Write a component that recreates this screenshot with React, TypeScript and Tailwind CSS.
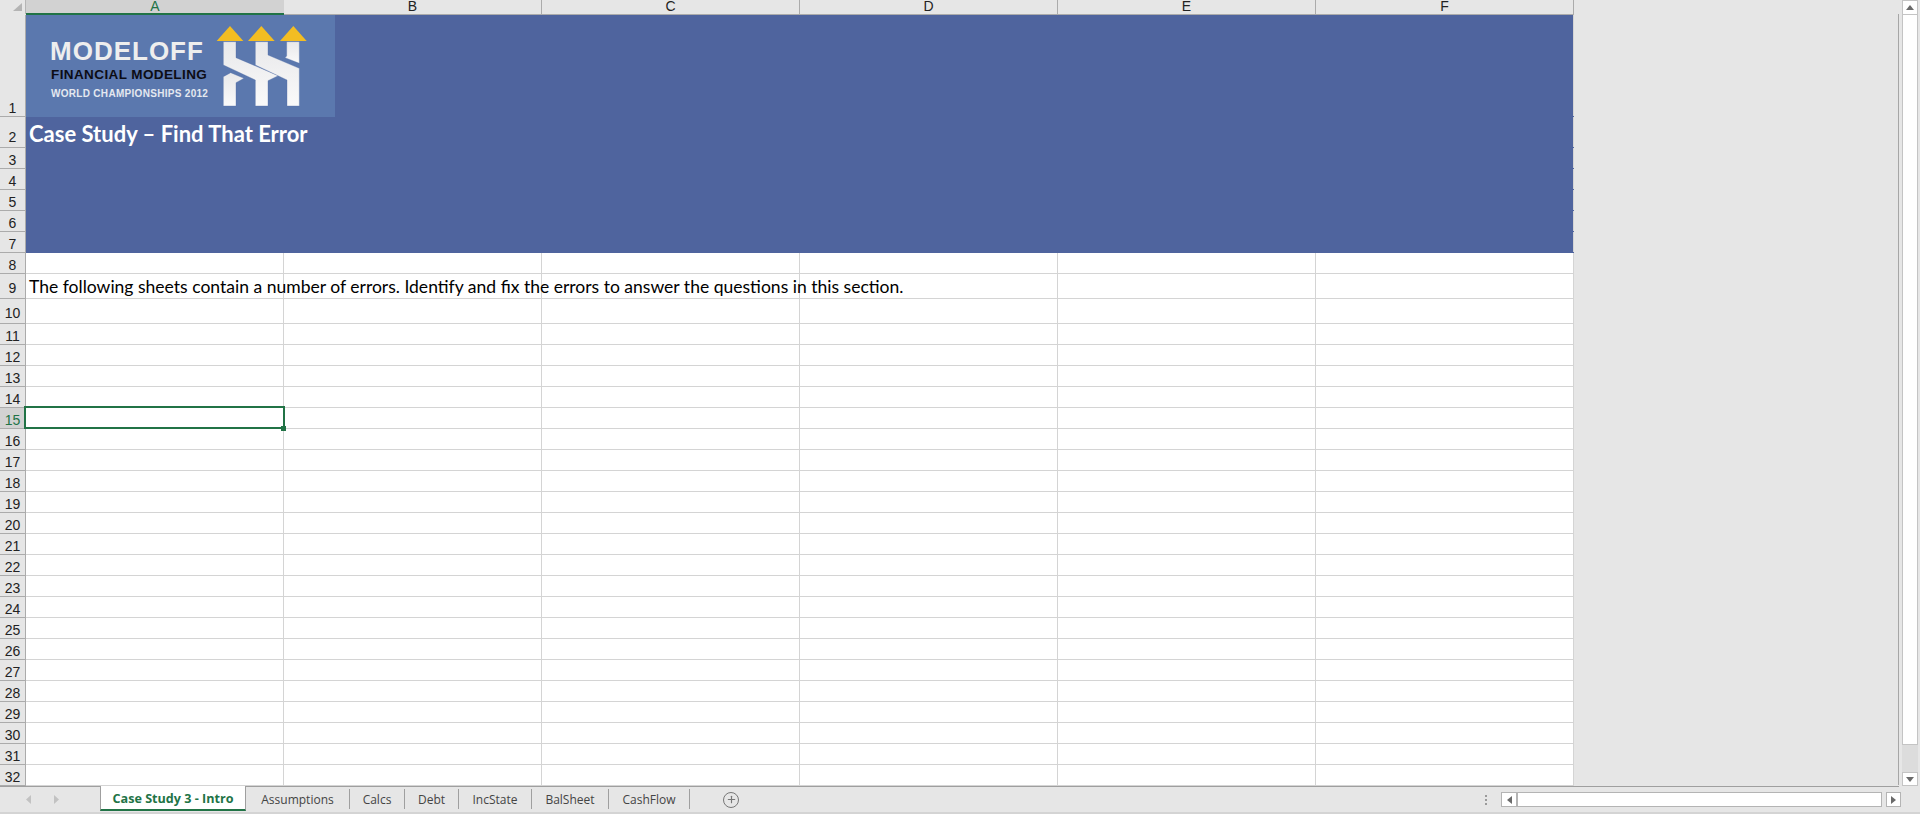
import { Plus } from 'lucide-react';

const columns = ['A', 'B', 'C', 'D', 'E', 'F'];
const tabs = [
  { name: 'Assumptions', w: 'w-[104px]' },
  { name: 'Calcs', w: 'w-[55px]' },
  { name: 'Debt', w: 'w-[54px]' },
  { name: 'IncState', w: 'w-[73px]' },
  { name: 'BalSheet', w: 'w-[77px]' },
  { name: 'CashFlow', w: 'w-[81px]' },
];

const rows = [
  { n: 1, h: 'h-[102px]', blue: true },
  { n: 2, h: 'h-[31px]', blue: true },
  { n: 3, h: 'h-[21px]', blue: true },
  { n: 4, h: 'h-[21px]', blue: true },
  { n: 5, h: 'h-[21px]', blue: true },
  { n: 6, h: 'h-[21px]', blue: true },
  { n: 7, h: 'h-[21px]', blue: true },
  { n: 8, h: 'h-[21px]', blue: false },
  { n: 9, h: 'h-[25px]', blue: false },
  { n: 10, h: 'h-[25px]', blue: false },
  ...Array.from({ length: 22 }, (_, i) => ({ n: i + 11, h: 'h-[21px]', blue: false })),
];

const LogoMark = () => (
  <svg className="absolute left-[174px] top-[-5px]" width="130" height="110" viewBox="0 0 390 330">
    <defs>
      <linearGradient id="strip" x1="0" y1="0" x2="0" y2="1">
        <stop offset="0" stopColor="#e8e8ea" />
        <stop offset="1" stopColor="#fafafa" />
      </linearGradient>
    </defs>
    <g fill="#f3bd22">
      <polygon points="90,48 130,93 50,93" />
      <polygon points="184,48 224,93 144,93" />
      <polygon points="280,48 320,93 240,93" />
    </g>
    <g fill="url(#strip)" stroke="#4f6aa3" strokeWidth="1">
      <polygon points="70,95 108,95 108,143 235,197 204,212 204,288 166,288 166,210 70,165" />
      <polygon points="166,95 204,95 204,135 298,175 298,288 261,288 261,210 166,165" />
      <polygon points="260,95 298,95 298,160 255,143 260,138" />
      <polygon points="70,288 108,288 108,218 132,205 92,188 70,200" />
    </g>
  </svg>
);

const Logo = () => (
  <div className="absolute left-0 top-0 w-[309px] h-[102px] bg-[#5b78ae] font-['Liberation_Sans',sans-serif]">
    <div className="absolute left-[24px] top-[21px] text-[26px] leading-[30px] font-bold tracking-[1px] text-[#eeeeee] whitespace-nowrap">MODELOFF</div>
    <div className="absolute left-[25px] top-[52px] text-[13.5px] leading-[16px] font-bold tracking-[0.4px] text-[#0c0c14] whitespace-nowrap">FINANCIAL MODELING</div>
    <div className="absolute left-[25px] top-[72px] text-[10px] leading-[14px] font-bold tracking-[0.3px] text-[#e4e8f0] whitespace-nowrap">WORLD CHAMPIONSHIPS 2012</div>
    <LogoMark />
  </div>
);

const ColumnHeader = () => (
  <div className="flex h-[15px] shrink-0">
    <div className="relative w-[26px] h-[14px] border-r border-[#b5b5b5]">
      <svg className="absolute left-[13px] top-[3px]" width="9" height="8" viewBox="0 0 9 8">
        <polygon points="9,0 9,8 0,8" fill="#b4b4b4" />
      </svg>
    </div>
    {columns.map((c, i) => (
      <div
        key={c}
        className={
          i === 0
            ? "w-[258px] h-[15px] bg-[#d2d2d2] border-b-2 border-[#217346] text-[#217346] text-center text-[14px] leading-[13px] font-['Liberation_Sans',sans-serif]"
            : "w-[258px] h-[15px] border-b border-r border-[#ababab] text-[#222222] text-center text-[14px] leading-[13px] font-['Liberation_Sans',sans-serif]"
        }
      >
        {c}
      </div>
    ))}
  </div>
);

const Row = ({ n, h, blue }: { n: number; h: string; blue: boolean }) => {
  const selected = n === 15;
  const tall = n === 2 || n === 9 || n === 10;
  return (
    <div className={`flex shrink-0 ${h}`}>
      <div
        className={`w-[26px] shrink-0 flex items-end justify-center border-r border-b border-[#ababab] text-[14px] font-['Liberation_Sans',sans-serif] ${
          selected ? 'bg-[#d2d2d2] text-[#217346]' : 'bg-[#e6e6e6] text-[#222222]'
        } ${tall ? 'leading-[20px]' : 'leading-[16px]'}`}
      >
        {n}
      </div>
      {blue ? (
        <div className="relative w-[1548px] bg-[#4f649e] border-r border-[#d4d4d4]">
          {n === 1 && <Logo />}
          {n === 2 && (
            <div className="pl-[3px] pt-[1px] text-[22px] leading-[31px] font-bold text-white whitespace-nowrap font-['Lato',sans-serif]">
              Case Study – Find That Error
            </div>
          )}
          <div className="absolute right-[-1px] bottom-0 w-px h-px bg-[#4f649e]" />
        </div>
      ) : (
        <div className="relative flex w-[1548px] bg-white">
          {columns.map((c) => (
            <div key={c} className="w-[258px] border-r border-b border-[#d4d4d4]" />
          ))}
          {n === 9 && (
            <div className="absolute left-[3px] top-0 text-[17.55px] leading-[25px] text-black whitespace-nowrap font-['Lato',sans-serif]">
              The following sheets contain a number of errors. Identify and fix the errors to answer the questions in this section.
            </div>
          )}
          {selected && (
            <div className="absolute z-10 left-[-2px] top-[-2px] w-[261px] h-[23px] border-2 border-[#217346]">
              <div className="absolute right-[-3px] bottom-[-4px] w-[5px] h-[5px] bg-[#217346]" />
            </div>
          )}
        </div>
      )}
    </div>
  );
};

const VerticalScrollbar = () => (
  <div className="flex w-[22px] shrink-0 ml-auto">
    <div className="w-[1px] mt-[14px] h-[771px] bg-[#a6a6a6]" />
    <div className="w-[3px]" />
    <div className="flex flex-col w-[16px]">
      <div className="flex items-center justify-center h-[15px] bg-white border border-[#c4c4c4]">
        <svg width="8" height="5" viewBox="0 0 8 5"><polygon points="4,0 8,5 0,5" fill="#6a6a6a" /></svg>
      </div>
      <div className="h-[730px] bg-white border-x border-b border-[#c4c4c4]" />
      <div className="flex-1 bg-[#dcdcdc]" />
      <div className="flex items-center justify-center h-[14px] bg-white border border-[#c4c4c4]">
        <svg width="8" height="5" viewBox="0 0 8 5"><polygon points="0,0 8,0 4,5" fill="#6a6a6a" /></svg>
      </div>
    </div>
  </div>
);

const TabBar = () => (
  <div className="relative flex items-stretch h-[28px] shrink-0 border-t border-[#9f9f9f] border-b-2 border-b-[#d4d4d4] bg-[#e6e6e6] font-['Open_Sans',sans-serif] text-[12px]">
    <div className="absolute right-0 top-[-1px] w-[21px] h-px bg-[#e6e6e6]" />
    <div className="flex items-center w-[100px] pl-[26px] gap-[23px]">
      <svg width="5" height="9" viewBox="0 0 5 9"><polygon points="5,0 5,9 0,4.5" fill="#c2c2c2" /></svg>
      <svg width="5" height="9" viewBox="0 0 5 9"><polygon points="0,0 0,9 5,4.5" fill="#c2c2c2" /></svg>
    </div>
    <div className="flex items-center justify-center w-[146px] -mt-px h-[25px] pt-[3px] bg-white border-x border-[#9f9f9f] border-b-2 border-b-[#217346] text-[12.6px] font-bold text-[#217346] whitespace-nowrap">
      Case Study 3 - Intro
    </div>
    {tabs.map((t) => (
      <div key={t.name} className={`flex items-center justify-center ${t.w} h-[20px] mt-[2px] pt-[1px] border-r border-[#9f9f9f] text-[#444444] whitespace-nowrap`}>
        {t.name}
      </div>
    ))}
    <div className="flex items-center ml-[33px]">
      <div className="flex items-center justify-center w-[16px] h-[16px] rounded-full border border-[#777777]">
        <Plus size={11} strokeWidth={2.5} color="#777777" />
      </div>
    </div>
    <div className="flex items-center ml-auto pr-[19px]">
      <div className="flex flex-col gap-[2px] mr-[14px]">
        <span className="w-[2px] h-[2px] bg-[#9a9a9a]" />
        <span className="w-[2px] h-[2px] bg-[#9a9a9a]" />
        <span className="w-[2px] h-[2px] bg-[#9a9a9a]" />
      </div>
      <div className="flex items-center justify-center w-[16px] h-[15px] bg-white border border-[#b4b4b4]">
        <svg width="5" height="8" viewBox="0 0 5 8"><polygon points="5,0 5,8 0,4" fill="#6a6a6a" /></svg>
      </div>
      <div className="w-[366px] h-[15px] bg-white border border-l-2 border-[#b4b4b4] -ml-px" />
      <div className="flex items-center justify-center w-[15px] h-[15px] ml-[4px] bg-white border border-[#b4b4b4]">
        <svg width="5" height="8" viewBox="0 0 5 8"><polygon points="0,0 0,8 5,4" fill="#6a6a6a" /></svg>
      </div>
    </div>
  </div>
);

export default function App() {
  return (
    <div className="flex flex-col w-[1920px] h-[814px] overflow-hidden bg-[#e6e6e6]">
      <div className="flex flex-1 min-h-0">
        <div className="flex flex-col w-[1574px] shrink-0">
          <ColumnHeader />
          {rows.map((r) => (
            <Row key={r.n} {...r} />
          ))}
        </div>
        <VerticalScrollbar />
      </div>
      <TabBar />
    </div>
  );
}
